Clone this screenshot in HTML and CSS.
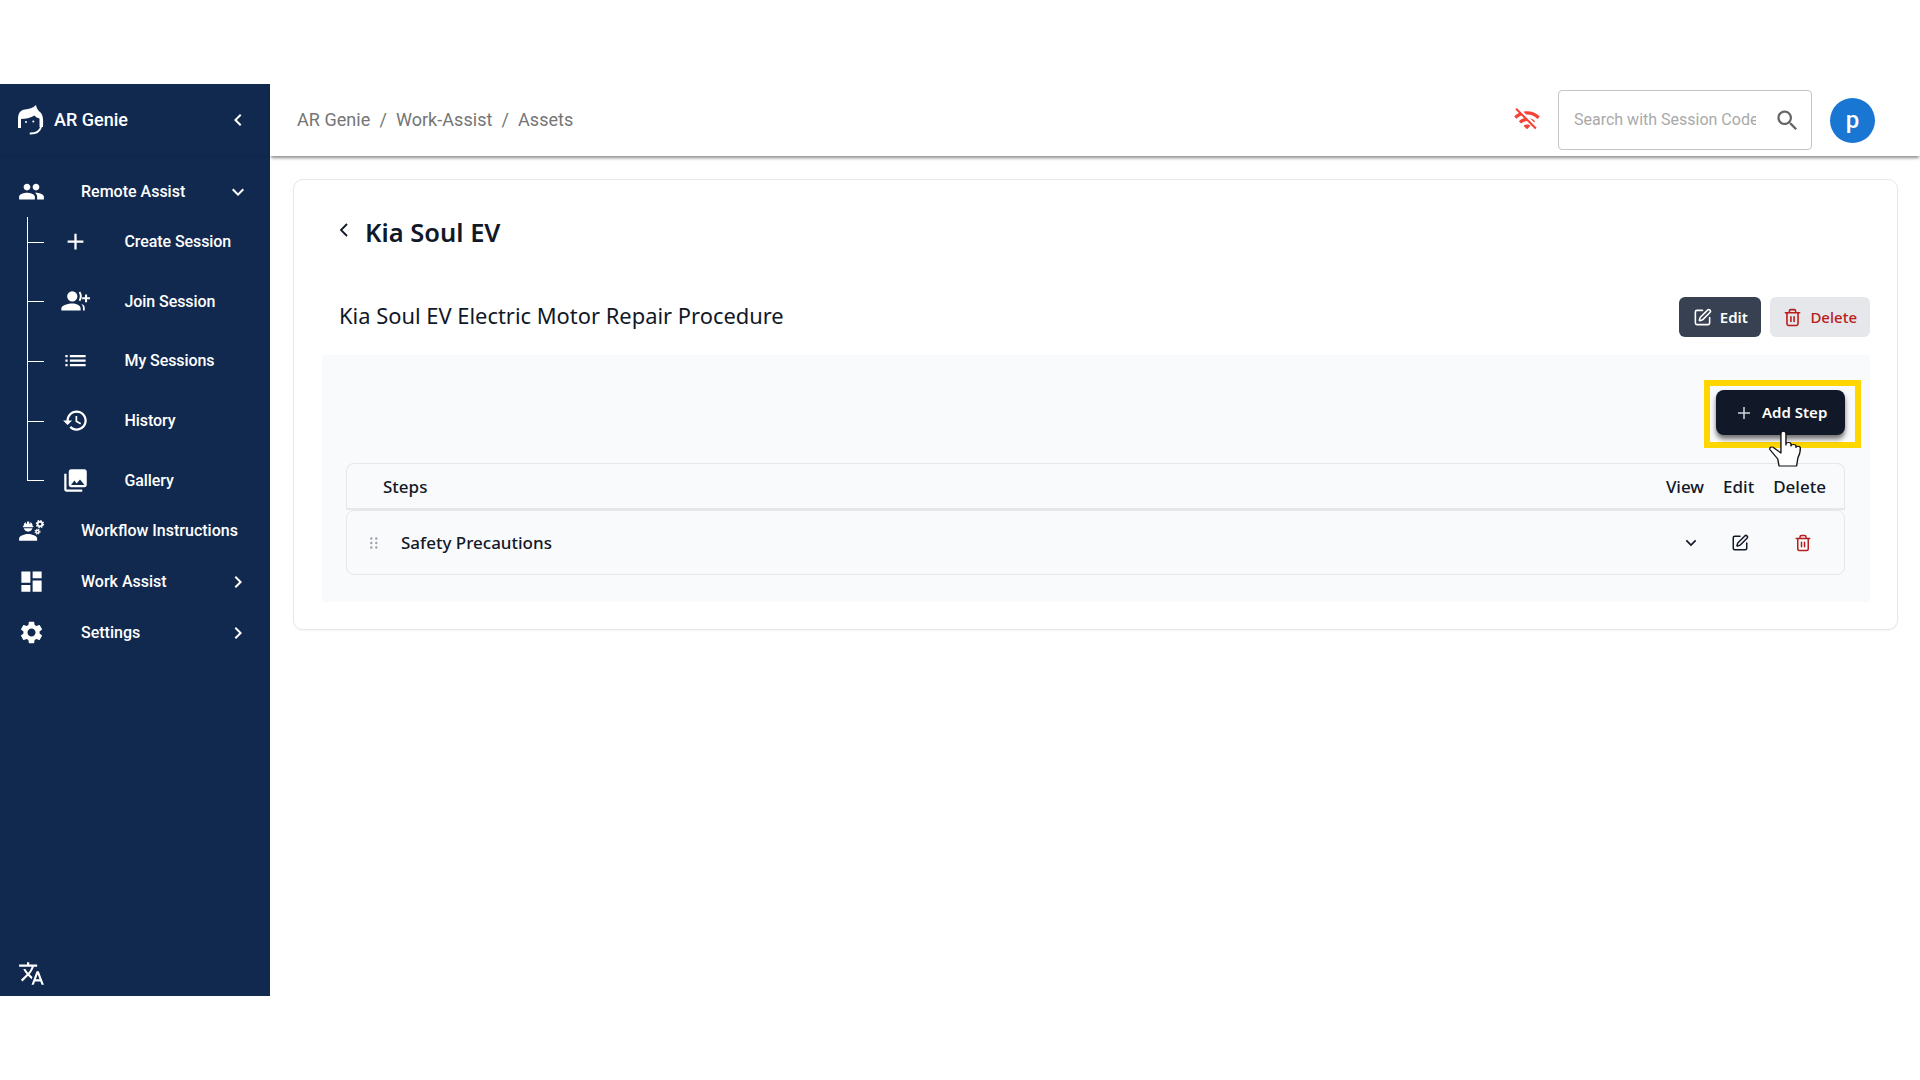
FILE: index.html
```html
<!DOCTYPE html>
<html>

<head>
  <meta charset="utf-8">
  <title>AR Genie</title>
  <link rel="stylesheet" href="styles.css">
</head>

<body>
  <div class="app">
    <aside class="sidebar">
      <div class="brand">
        <svg class="brand-logo" viewBox="7 5 27 30" fill="#fff">
          <path d="M8 28V20C8 12 11 10 15 9.500C19 9 23 8 26 5C26.500 8 28 10.500 30 12C33 14.500 33.500 19 33 27H29.500V18.500C27.500 18 25.500 17 24.500 15.500C21 18 15 19 11 19V28Z" />
          <path d="M31 27C30 31 26 33.500 20.500 33.500" fill="none" stroke="#fff" stroke-width="1.800" stroke-linecap="round" />
          <circle cx="16" cy="22" r="1" />
          <circle cx="23.300" cy="21.500" r="1" />
        </svg>
        <span class="brand-name">AR Genie</span>
        <svg class="chevron" viewBox="0 0 24 24"><path d="M15.41 7.41 14 6l-6 6 6 6 1.41-1.41L10.83 12z" /></svg>
      </div>

      <nav class="nav">
        <div class="nav-group">
          <div class="nav-item">
            <svg class="nav-icon" viewBox="0 0 24 24"><path d="M16 11c1.66 0 2.99-1.34 2.99-3S17.66 5 16 5c-1.66 0-3 1.34-3 3s1.34 3 3 3zm-8 0c1.66 0 2.99-1.34 2.99-3S9.66 5 8 5C6.34 5 5 6.34 5 8s1.34 3 3 3zm0 2c-2.33 0-7 1.17-7 3.5V19h14v-2.5c0-2.33-4.67-3.5-7-3.5zm8 0c-.29 0-.62.02-.97.05 1.16.84 1.97 1.97 1.97 3.45V19h6v-2.5c0-2.33-4.67-3.5-7-3.5z" /></svg>
            <span class="nav-label">Remote Assist</span>
            <svg class="chevron" viewBox="0 0 24 24"><path d="M16.59 8.59 12 13.17 7.41 8.59 6 10l6 6 6-6z" /></svg>
          </div>
          <div class="submenu">
            <div class="sub-item">
              <svg class="nav-icon" viewBox="0 0 24 24"><path d="M19 13h-6v6h-2v-6H5v-2h6V5h2v6h6v2z" /></svg>
              <span class="sub-label">Create Session</span>
            </div>
            <div class="sub-item">
              <svg class="nav-icon" viewBox="1.500 1.500 21 21">
                <path d="M9.500 12a4 4 0 1 0 0-8 4 4 0 0 0 0 8zm0 1.500c-2.900 0-8.500 1.300-8.500 3.700V19h15v-1.800c0-2.400-3.600-3.700-6.500-3.700z" />
                <path d="M14.500 5c1.200 1.800 1.200 4.200 0 6l1.200.8c1.600-2.300 1.600-5.300 0-7.600zM16.300 13.800c1 .8 1.500 2 1.500 3.400V19h1.400v-2c0-1.500-1-2.700-2.900-3.200z" />
                <path d="M21 6.500v2.200h2.200v1.600H21v2.200h-1.600v-2.200h-2.200V8.700h2.200V6.500z" />
              </svg>
              <span class="sub-label">Join Session</span>
            </div>
            <div class="sub-item">
              <svg class="nav-icon" viewBox="0 0 24 24"><path d="M3 13h2v-2H3v2zm0 4h2v-2H3v2zm0-8h2V7H3v2zm4 4h14v-2H7v2zm0 4h14v-2H7v2zM7 7v2h14V7H7z" /></svg>
              <span class="sub-label">My Sessions</span>
            </div>
            <div class="sub-item">
              <svg class="nav-icon" viewBox="0 0 24 24"><path d="M13 3c-4.970 0-9 4.030-9 9H1l3.890 3.890.07.14L9 12H6c0-3.870 3.130-7 7-7s7 3.130 7 7-3.130 7-7 7c-1.930 0-3.680-.79-4.940-2.060l-1.420 1.420C8.270 19.990 10.510 21 13 21c4.970 0 9-4.030 9-9s-4.030-9-9-9zm-1 5v5l4.280 2.540.72-1.210-3.500-2.080V8H12z" /></svg>
              <span class="sub-label">History</span>
            </div>
            <div class="sub-item">
              <svg class="nav-icon" viewBox="0 0 24 24"><path d="M22 16V4c0-1.100-.9-2-2-2H8c-1.100 0-2 .9-2 2v12c0 1.100.9 2 2 2h12c1.100 0 2-.9 2-2zm-11-4 2.030 2.710L16 11l4 5H8l3-4zM2 6v14c0 1.100.9 2 2 2h14v-2H4V6H2z" /></svg>
              <span class="sub-label">Gallery</span>
            </div>
          </div>
        </div>

        <div class="nav-item">
          <svg class="nav-icon" viewBox="0 0 24 24">
            <path d="M9 15c-2.670 0-8 1.340-8 4v2h16v-2c0-2.660-5.330-4-8-4z" />
            <path d="M4.740 9h8.530c.27 0 .49-.22.49-.49v-.02c0-.27-.22-.49-.49-.49H13c0-1.480-.81-2.750-2-3.450v.95c0 .28-.22.5-.5.5s-.5-.22-.5-.5V4.140C9.680 4.060 9.350 4 9 4s-.68.06-1 .14V5.500c0 .28-.22.5-.5.5S7 5.780 7 5.500v-.95C5.810 5.250 5 6.520 5 8h-.26c-.27 0-.49.22-.49.49v.03c0 .26.22.48.49.48z" />
            <path d="M9 13c1.860 0 3.410-1.280 3.860-3H5.140c.45 1.720 2 3 3.860 3z" />
            <circle cx="19.500" cy="6.300" r="2.100" fill="none" stroke="#fff" stroke-width="1.600" />
            <circle cx="19.500" cy="6.300" r="3.200" fill="none" stroke="#fff" stroke-width="1.100" stroke-dasharray="1.300 1.200" />
            <circle cx="17.300" cy="13" r="1.300" fill="none" stroke="#fff" stroke-width="1.300" />
            <circle cx="17.300" cy="13" r="2.200" fill="none" stroke="#fff" stroke-width=".9" stroke-dasharray="1 .8" />
          </svg>
          <span class="nav-label">Workflow Instructions</span>
        </div>
        <div class="nav-item">
          <svg class="nav-icon" viewBox="0 0 24 24"><path d="M3 13h8V3H3v10zm0 8h8v-6H3v6zm10 0h8V11h-8v10zm0-18v6h8V3h-8z" /></svg>
          <span class="nav-label">Work Assist</span>
          <svg class="chevron" viewBox="0 0 24 24"><path d="M10 6 8.590 7.410 13.170 12l-4.580 4.590L10 18l6-6z" /></svg>
        </div>
        <div class="nav-item">
          <svg class="nav-icon" viewBox="0 0 24 24"><path d="M19.140 12.940c.04-.3.06-.61.06-.94 0-.32-.02-.64-.07-.94l2.030-1.580c.18-.14.23-.41.12-.61l-1.920-3.320c-.12-.22-.37-.29-.59-.22l-2.390.96c-.5-.38-1.030-.7-1.620-.94l-.36-2.540c-.04-.24-.24-.41-.48-.41h-3.840c-.24 0-.43.17-.47.41l-.36 2.540c-.59.24-1.130.57-1.620.94l-2.390-.96c-.22-.08-.47 0-.59.22L2.740 8.870c-.12.21-.08.47.12.61l2.030 1.580c-.05.3-.09.63-.09.94s.02.64.07.94l-2.030 1.580c-.18.14-.23.41-.12.61l1.920 3.320c.12.22.37.29.59.22l2.390-.96c.5.38 1.030.7 1.620.94l.36 2.540c.05.24.24.41.48.41h3.840c.24 0 .44-.17.47-.41l.36-2.540c.59-.24 1.130-.56 1.620-.94l2.390.96c.22.08.47 0 .59-.22l1.920-3.320c.12-.22.07-.47-.12-.61l-2.010-1.580zM12 15.600c-1.980 0-3.600-1.620-3.600-3.600s1.620-3.600 3.600-3.600 3.600 1.620 3.600 3.600-1.620 3.600-3.600 3.600z" /></svg>
          <span class="nav-label">Settings</span>
          <svg class="chevron" viewBox="0 0 24 24"><path d="M10 6 8.590 7.410 13.170 12l-4.580 4.590L10 18l6-6z" /></svg>
        </div>
      </nav>

      <div class="sidebar-footer">
        <svg class="nav-icon" viewBox="0 0 24 24"><path d="M12.870 15.070l-2.540-2.510.03-.03c1.740-1.940 2.980-4.170 3.710-6.530H17V4h-7V2H8v2H1v1.990h11.170C11.500 7.920 10.440 9.750 9 11.350 8.070 10.320 7.300 9.190 6.690 8h-2c.73 1.630 1.730 3.170 2.980 4.560l-5.090 5.020L4 19l5-5 3.110 3.110.76-2.040zM18.500 10h-2L12 22h2l1.120-3h4.750L21 22h2l-4.500-12zm-2.620 7l1.620-4.330L19.120 17h-3.240z" /></svg>
      </div>
    </aside>

    <div class="main">
      <header class="topbar">
        <div class="breadcrumb">
          <span>AR Genie</span><span class="crumb-sep">/</span><span>Work-Assist</span><span class="crumb-sep">/</span><span>Assets</span>
        </div>
        <div class="topbar-right">
          <svg class="wifi-off" viewBox="0 0 24 24"><path d="M22.990 9C19.150 5.160 13.800 3.780 8.850 4.830l2.520 2.520c3.470-.17 6.990 1.050 9.630 3.700l2-2.050zm-4 4c-1.290-1.290-2.840-2.130-4.490-2.560l3.530 3.530.96-.97zM2 3.050 5.070 6.100C3.600 6.820 2.220 7.780 1 9l1.990 2c1.240-1.240 2.670-2.160 4.200-2.770l2.240 2.240C7.810 10.890 6.270 11.730 5 13v.01L6.990 15c1.360-1.360 3.140-2.040 4.920-2.060L18.980 20l1.270-1.260L3.290 1.790 2 3.050zM9 17l3 3 3-3c-1.650-1.660-4.340-1.660-6 0z" /></svg>
          <div class="search">
            <input class="search-input" type="text" placeholder="Search with Session Code">
            <svg class="search-icon" viewBox="0 0 24 24"><path d="M15.500 14h-.79l-.28-.27C15.410 12.590 16 11.110 16 9.500 16 5.910 13.090 3 9.500 3S3 5.910 3 9.500 5.910 16 9.500 16c1.610 0 3.090-.59 4.230-1.570l.27.28v.79l5 4.990L20.490 19l-4.990-5zm-6 0C7.010 14 5 11.990 5 9.500S7.010 5 9.500 5 14 7.010 14 9.500 11.990 14 9.500 14z" /></svg>
          </div>
          <div class="avatar">p</div>
        </div>
      </header>

      <section class="card">
        <div class="page-title">
          <svg class="back" viewBox="0 0 16 16" fill="none" stroke="#111827" stroke-width="1.800"><path d="M11 2 5 8l6 6" /></svg>
          <h1>Kia Soul EV</h1>
        </div>

        <div class="procedure">
          <h2>Kia Soul EV Electric Motor Repair Procedure</h2>
          <div class="procedure-actions">
            <button class="btn btn-edit">
              <svg class="btn-icon" viewBox="0 0 24 24" fill="none" stroke="currentColor" stroke-width="2" stroke-linecap="round" stroke-linejoin="round"><path d="M12 3H5a2 2 0 0 0-2 2v14a2 2 0 0 0 2 2h14a2 2 0 0 0 2-2v-7" /><path d="M18.375 2.625a1 1 0 0 1 3 3l-9.013 9.014a2 2 0 0 1-.853.505l-2.873.84a.5.5 0 0 1-.62-.62l.84-2.873a2 2 0 0 1 .506-.852z" /></svg>
              Edit
            </button>
            <button class="btn btn-delete">
              <svg class="btn-icon" viewBox="0 0 24 24" fill="none" stroke="currentColor" stroke-width="2" stroke-linecap="round" stroke-linejoin="round"><path d="M3 6h18M19 6v14c0 1-1 2-2 2H7c-1 0-2-1-2-2V6M8 6V4c0-1 1-2 2-2h4c1 0 2 1 2 2v2M10 11v6M14 11v6" /></svg>
              Delete
            </button>
          </div>
        </div>

        <div class="steps-panel">
          <div class="add-row">
            <div class="highlight">
              <button class="btn-add">
                <svg class="add-icon" viewBox="0 0 24 24" fill="none" stroke="currentColor" stroke-width="2"><path d="M12 4v16M4 12h16" /></svg>
                <span class="add-label">Add Step</span>
              </button>
              <svg class="hand" viewBox="0 0 25.500 37" preserveAspectRatio="none">
                <path d="M9.500 3.500c0-3 4-3 4 0V15v-1c0-2 4-2 4 0v2c0-2 4-2 4 0v1.500c0-2 3.500-1.500 3.500.5 0 4-.5 7-2 10l-1 8H8l-1-7-6-9c-1.500-2.500 1.500-4 3-2l5.500 5z" fill="#fff" stroke="#111" stroke-width="1.100" stroke-linejoin="round" />
              </svg>
            </div>
          </div>

          <div class="steps-table">
            <div class="steps-head">
              <span class="steps-title">Steps</span>
              <span class="head-col">View</span>
              <span class="head-col">Edit</span>
              <span class="head-col">Delete</span>
            </div>
            <div class="step-row">
              <svg class="grip" viewBox="0 0 8 12"><circle cx="1.300" cy="1.500" r="1.200" /><circle cx="6.300" cy="1.500" r="1.200" /><circle cx="1.300" cy="6" r="1.200" /><circle cx="6.300" cy="6" r="1.200" /><circle cx="1.300" cy="10.500" r="1.200" /><circle cx="6.300" cy="10.500" r="1.200" /></svg>
              <span class="step-name">Safety Precautions</span>
              <svg class="row-chevron" viewBox="0 0 24 24" fill="none" stroke="currentColor" stroke-width="2.500"><path d="m5 8 7 7 7-7" /></svg>
              <svg class="row-edit" viewBox="0 0 24 24" fill="none" stroke="currentColor" stroke-width="2" stroke-linecap="round" stroke-linejoin="round"><path d="M12 3H5a2 2 0 0 0-2 2v14a2 2 0 0 0 2 2h14a2 2 0 0 0 2-2v-7" /><path d="M18.375 2.625a1 1 0 0 1 3 3l-9.013 9.014a2 2 0 0 1-.853.505l-2.873.84a.5.5 0 0 1-.62-.62l.84-2.873a2 2 0 0 1 .506-.852z" /></svg>
              <svg class="row-delete" viewBox="0 0 24 24" fill="none" stroke="currentColor" stroke-width="2" stroke-linecap="round" stroke-linejoin="round"><path d="M3 6h18M19 6v14c0 1-1 2-2 2H7c-1 0-2-1-2-2V6M8 6V4c0-1 1-2 2-2h4c1 0 2 1 2 2v2M10 11v6M14 11v6" /></svg>
            </div>
          </div>
        </div>
      </section>
    </div>
  </div>
</body>

</html>
```

FILE: styles.css
```css
* {
  box-sizing: border-box;
}

body {
  margin: 0;
  padding-top: 84px;
  background: #fff;
  font-family: "Noto Sans", "Open Sans", sans-serif;
  color: #111827;
}

.app {
  display: flex;
  height: 912px;
}

/* sidebar */
.sidebar {
  display: flex;
  flex-direction: column;
  flex: 0 0 270px;
  background: #11294f;
  color: #fff;
  font-family: Roboto, sans-serif;
}

.brand {
  display: flex;
  align-items: center;
  height: 72px;
  padding: 0 20px 0 17px;
  border-bottom: 1px solid #0f2547;
}

.brand-logo {
  width: 27px;
  height: 30px;
  margin-right: 10px;
}

.brand-name {
  flex: 1;
  font-size: 18px;
  font-weight: 500;
}

.chevron {
  width: 24px;
  height: 24px;
  fill: #fff;
  flex: none;
}

.nav {
  display: flex;
  flex-direction: column;
  gap: 10px;
  padding-top: 15px;
}

.nav-item {
  display: flex;
  align-items: center;
  height: 41px;
  padding: 0 20px 0 18px;
}

.nav-icon {
  width: 27px;
  height: 27px;
  fill: #fff;
  flex: none;
  overflow: visible;
}

.nav-label {
  flex: 1;
  margin-left: 36px;
  font-size: 16px;
  font-weight: 500;
}

.submenu {
  position: relative;
  display: flex;
  flex-direction: column;
  gap: 19.7px;
  padding-top: 9.5px;
}

.submenu::before {
  content: "";
  position: absolute;
  left: 27px;
  top: 5px;
  bottom: 19px;
  width: 1px;
  background: #fff;
}

.sub-item {
  position: relative;
  display: flex;
  align-items: center;
  height: 40px;
  padding-left: 62px;
}

.sub-item::before {
  content: "";
  position: absolute;
  left: 27px;
  top: 50%;
  width: 17px;
  height: 1px;
  background: #fff;
}

.sub-label {
  margin-left: 35.5px;
  font-size: 16px;
  font-weight: 500;
  letter-spacing: -0.005em;
}

.sidebar-footer {
  margin-top: auto;
  padding: 0 0 5px 18px;
}

/* top bar */
.main {
  flex: 1;
  min-width: 0;
}

.topbar {
  display: flex;
  align-items: center;
  justify-content: space-between;
  height: 72px;
  padding: 0 45px 0 27px;
  box-shadow: 0 3px 3px -1px rgba(0, 0, 0, 0.45);
}

.breadcrumb {
  display: flex;
  padding-bottom: 2px;
  font-family: Roboto, sans-serif;
  font-size: 18px;
  letter-spacing: 0.003em;
  color: #757575;
}

.crumb-sep {
  margin: 0 9px;
}

.topbar-right {
  display: flex;
  align-items: center;
}

.wifi-off {
  width: 28px;
  height: 28px;
  fill: #f44336;
  margin-right: 17px;
}

.search {
  display: flex;
  align-items: center;
  width: 254px;
  height: 60px;
  padding: 0 10px 0 15px;
  border: 1px solid #c4c4c4;
  border-radius: 4px;
}

.search-input {
  flex: 1;
  min-width: 0;
  padding: 0 0 2px;
  border: 0;
  outline: 0;
  font-family: Roboto, sans-serif;
  font-size: 16px;
}

.search-input::placeholder {
  color: #a9a9a9;
  opacity: 1;
}

.search-icon {
  width: 27px;
  height: 27px;
  margin-left: 18px;
  fill: #666;
  flex: none;
}

.avatar {
  display: flex;
  align-items: center;
  justify-content: center;
  width: 45px;
  height: 45px;
  margin-left: 18px;
  border-radius: 50%;
  background: #1976d2;
  color: #fff;
  font-family: Roboto, sans-serif;
  font-size: 24px;
  font-weight: 500;
}

/* card */
.card {
  margin: 23px 22px 0 23px;
  height: 451px;
  padding: 29px 27px 27px 28px;
  border: 1px solid #e5e7eb;
  border-radius: 10px;
  box-shadow: 0 1px 2px rgba(0, 0, 0, 0.05);
}

.page-title {
  display: flex;
  align-items: center;
  height: 46px;
  padding-left: 14px;
}

.back {
  width: 16px;
  height: 16px;
  margin-top: -5px;
  margin-right: 13px;
}

h1 {
  margin: 0;
  font-size: 25.5px;
  font-weight: 600;
}

.procedure {
  display: flex;
  align-items: center;
  justify-content: space-between;
  height: 40px;
  margin-top: 42px;
  padding-left: 17px;
}

h2 {
  margin: 0;
  padding-bottom: 3px;
  font-size: 21.9px;
  font-weight: 400;
}

.procedure-actions {
  display: flex;
  gap: 9px;
}

.btn {
  display: flex;
  align-items: center;
  gap: 8px;
  height: 40px;
  padding: 0 13px;
  border: 0;
  border-radius: 6px;
  font-family: inherit;
  font-size: 15px;
}

.btn-edit {
  padding: 0 13.5px;
  background: #374151;
  color: #fff;
  font-weight: 600;
}

.btn-delete {
  background: #e5e7eb;
  color: #b91c1c;
  font-weight: 500;
}

.btn-icon {
  width: 19px;
  height: 19px;
}

.steps-panel {
  margin-top: 18px;
  height: 247px;
  padding-top: 25px;
  background: #f9fafb;
}

.add-row {
  display: flex;
  justify-content: flex-end;
  padding-right: 9px;
}

.highlight {
  position: relative;
  padding: 4px 10px 7px 6px;
  border: 6px solid #ffd600;
}

.btn-add {
  display: flex;
  align-items: center;
  gap: 9px;
  width: 129px;
  height: 45px;
  padding: 0 0 0 19px;
  border: 0;
  border-radius: 8px;
  background: #111827;
  color: #fff;
  font-family: inherit;
  font-size: 15px;
  font-weight: 600;
  box-shadow: 0 4px 5px rgba(0, 0, 0, 0.55);
}

.add-icon {
  width: 18px;
  height: 18px;
  color: #d1d5db;
}

.add-label {
  padding-bottom: 2px;
}

.hand {
  position: absolute;
  left: 59px;
  top: 44px;
  width: 32px;
  height: 37px;
}

.steps-table {
  margin: 15px 25px 0 24px;
}

.steps-head {
  display: flex;
  align-items: center;
  height: 47px;
  padding: 0 18px 0 36px;
  border: 1px solid #e5e7eb;
  border-bottom-width: 2px;
  border-radius: 8px 8px 0 0;
  font-size: 17px;
  font-weight: 500;
}

.steps-title {
  flex: 1;
}

.head-col {
  margin-left: 19px;
}

.step-row {
  display: flex;
  align-items: center;
  height: 65px;
  padding-left: 23px;
  border: 1px solid #e5e7eb;
  border-radius: 8px;
  font-size: 17px;
  font-weight: 500;
}

.grip {
  width: 8px;
  height: 12px;
  fill: #9ca3af;
}

.step-name {
  flex: 1;
  margin-left: 23px;
}

.row-chevron {
  width: 16px;
  height: 16px;
}

.row-edit {
  width: 18px;
  height: 18px;
  margin-left: 32px;
}

.row-delete {
  width: 18px;
  height: 18px;
  margin: 0 32px 0 45px;
  color: #b91c1c;
}
```
